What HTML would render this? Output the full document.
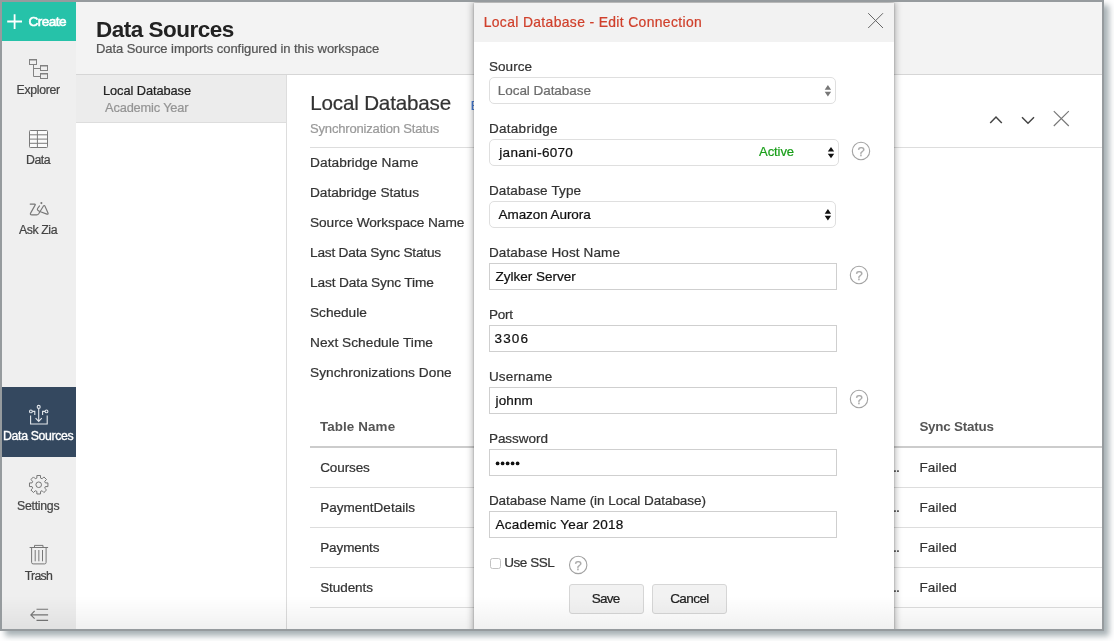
<!DOCTYPE html>
<html lang="en">
<head>
<meta charset="utf-8">
<title>Data Sources - Local Database - Edit Connection</title>
<style>
html,body{margin:0;padding:0;}
body{width:1114px;height:641px;overflow:hidden;background:#ffffff;position:relative;
  font-family:"Liberation Sans", sans-serif;}
#win{position:absolute;left:0;top:0;width:1104px;height:630.5px;box-sizing:border-box;
  border:2px solid #969b9e;background:#ffffff;overflow:hidden;
  box-shadow:4.5px 4.5px 6px 0 rgba(131,144,149,0.7);}
#c{position:absolute;left:-2px;top:-2px;width:1104px;height:631px;will-change:transform;}
.a{position:absolute;}
.t{position:absolute;white-space:pre;line-height:1;-webkit-text-stroke-width:0.22px;}
svg{position:absolute;left:0;top:0;overflow:visible;}
#dlg{position:absolute;left:474px;top:3px;width:420px;height:640px;background:#ffffff;
  box-shadow:0 0 2px rgba(0,0,0,0.26),0 0 7px 1px rgba(0,0,0,0.32);}
.sel{position:absolute;box-sizing:border-box;border:1px solid #dfdfdf;border-radius:5px;background:#fff;height:27px;}
.inp{position:absolute;box-sizing:border-box;border:1px solid #cfcfcf;background:#fff;height:27px;left:489px;width:348px;}
.btn{position:absolute;box-sizing:border-box;border:1px solid #d6d6d6;border-radius:3px;background:#f2f2f2;top:584px;height:30px;}
</style>
</head>
<body>
<div id="win"><div id="c">

<!-- sidebar -->
<div class="a" style="left:2px;top:2px;width:74px;height:627px;background:#efefef"></div>
<div class="a" style="left:2px;top:2px;width:74px;height:39px;background:#26c2a9"></div>
<div class="a" style="left:2px;top:387px;width:74px;height:70px;background:#34485f"></div>

<!-- page header -->
<div class="a" style="left:76px;top:2px;width:1026px;height:72px;background:#f3f3f3"></div>
<div class="a" style="left:76px;top:74px;width:1026px;height:1px;background:#d6d6d6"></div>

<!-- list panel -->
<div class="a" style="left:76px;top:75px;width:210px;height:47px;background:#ececec"></div>
<div class="a" style="left:76px;top:122px;width:210px;height:1px;background:#dddddd"></div>
<div class="a" style="left:286px;top:75px;width:1px;height:554px;background:#dddddd"></div>

<!-- detail lines -->
<div class="a" style="left:310px;top:147px;width:792px;height:1px;background:#dddddd"></div>
<div class="a" style="left:310px;top:446px;width:792px;height:2px;background:#cccccc"></div>
<div class="a" style="left:310px;top:487px;width:792px;height:1px;background:#dddddd"></div>
<div class="a" style="left:310px;top:527px;width:792px;height:1px;background:#dddddd"></div>
<div class="a" style="left:310px;top:567px;width:792px;height:1px;background:#dddddd"></div>
<div class="a" style="left:310px;top:607px;width:792px;height:1px;background:#dddddd"></div>

<!-- window icons -->
<svg width="1104" height="631" viewBox="0 0 1104 631" fill="none">
  <!-- plus -->
  <path d="M7.2 21.5H22M14.6 14.2V28.9" stroke="#ffffff" stroke-width="1.8"/>
  <!-- explorer -->
  <g stroke="#828282" stroke-width="1">
    <rect x="29.5" y="59.5" width="7" height="5"/>
    <path d="M29.5 60.4H36.5" stroke-opacity="0.55"/>
    <rect x="40.5" y="65.5" width="7" height="5"/>
    <path d="M40.5 66.4H47.5" stroke-opacity="0.55"/>
    <rect x="40.5" y="73.5" width="7" height="5"/>
    <path d="M40.5 74.4H47.5" stroke-opacity="0.55"/>
    <path d="M33.5 65V76.5H40.5M33.5 68.5H40.5"/>
  </g>
  <!-- data grid -->
  <g stroke="#7b7b7b" stroke-width="1">
    <rect x="29.5" y="130.5" width="18" height="17" rx="0.8" fill="#fbfbfb"/>
    <path d="M29.5 134.8H47.5M29.5 139.1H47.5M29.5 143.3H47.5M37.4 130.5V147.5"/>
  </g>
  <!-- zia -->
  <g stroke="#777777" stroke-width="1.15" stroke-linecap="round" stroke-linejoin="round">
    <path d="M30.2 204.05H34.6Q35.7 204.05 35.1 205.1L30.6 213.1Q29.7 214.9 31.8 214.9H36.7Q38 214.9 38.7 213.8L43.3 206.2Q44.3 204.8 45.1 206.4L48 213Q48.5 214.7 46.9 214.1L40.5 211.7Q36.4 210.2 37.6 208.5L39.5 205.9"/>
    <circle cx="41.4" cy="203.1" r="0.45" fill="#777777"/>
  </g>
  <!-- data sources -->
  <g stroke="#e3e7ec" stroke-width="1.1">
    <path d="M30.6 415.6V424H47.2V415.6"/>
    <path d="M38.7 408.6V421.2M35.6 418.2L38.7 421.4L41.8 418.2"/>
    <circle cx="38.7" cy="406.9" r="1.5"/>
    <circle cx="30.9" cy="411.4" r="1.4"/>
    <circle cx="46.5" cy="411.4" r="1.4"/>
    <path d="M32.4 411.4H34.8V414.9M45 411.4H42.6V414.9"/>
  </g>
  <!-- settings -->
  <g stroke="#777777" stroke-width="1" stroke-linejoin="round">
    <path d="M36.88 478.09 L36.87 475.53 L40.53 475.53 L40.52 478.09 L42.12 478.76 L43.92 476.93 L46.52 479.53 L44.69 481.33 L45.36 482.93 L47.92 482.92 L47.92 486.58 L45.36 486.57 L44.69 488.17 L46.52 489.97 L43.92 492.57 L42.12 490.74 L40.52 491.41 L40.53 493.97 L36.87 493.97 L36.88 491.41 L35.28 490.74 L33.48 492.57 L30.88 489.97 L32.71 488.17 L32.04 486.57 L29.48 486.58 L29.48 482.92 L32.04 482.93 L32.71 481.33 L30.88 479.53 L33.48 476.93 L35.28 478.76Z"/>
    <circle cx="38.7" cy="484.75" r="2.8"/>
  </g>
  <!-- trash -->
  <g stroke="#777777" stroke-width="1">
    <path d="M29.6 547.5H48.1M34.5 547.5V545.4H43V547.5"/>
    <path d="M31.6 547.5V562.4Q31.6 563.9 33.1 563.9H44.6Q46.1 563.9 46.1 562.4V547.5"/>
    <path d="M35.2 550V561.3M38.85 550V561.3M42.5 550V561.3"/>
  </g>
  <!-- collapse -->
  <g stroke="#777777" stroke-width="1.1">
    <path d="M36.5 609.3H48.1M30.8 614.9H48.1M36.5 620.4H48.1M34.6 611L30.8 614.9L34.6 618.7"/>
  </g>
  <!-- chevrons + close -->
  <g stroke="#444444" stroke-width="1.5">
    <path d="M990.2 123L996 117L1001.8 123"/>
    <path d="M1022 117.2L1028 123.2L1034 117.2"/>
  </g>
  <path d="M1053.8 111.2L1068.8 126M1068.8 111.2L1053.8 126" stroke="#777777" stroke-width="1.15"/>
</svg>

<span class="t" style="left:28.40px;top:14.79px;font-size:13.6px;-webkit-text-stroke-width:0.6px;letter-spacing:-0.535px;color:#ffffff">Create</span>
<span class="t" style="left:95.90px;top:19.15px;font-size:22.5px;font-weight:bold;-webkit-text-stroke-width:0;letter-spacing:-0.484px;color:#222222">Data Sources</span>
<span class="t" style="left:95.90px;top:42.40px;font-size:13px;letter-spacing:-0.059px;color:#555555">Data Source imports configured in this workspace</span>
<span class="t" style="left:16.60px;top:83.69px;font-size:12.3px;letter-spacing:-0.337px;color:#444444">Explorer</span>
<span class="t" style="left:26.10px;top:153.79px;font-size:12.3px;letter-spacing:-0.521px;color:#444444">Data</span>
<span class="t" style="left:19.00px;top:223.69px;font-size:12.3px;letter-spacing:-0.414px;color:#444444">Ask Zia</span>
<span class="t" style="left:3.10px;top:429.59px;font-size:12.3px;-webkit-text-stroke-width:0.35px;letter-spacing:-0.360px;color:#ffffff">Data Sources</span>
<span class="t" style="left:17.10px;top:499.79px;font-size:12.3px;letter-spacing:-0.280px;color:#444444">Settings</span>
<span class="t" style="left:24.80px;top:569.59px;font-size:12.3px;letter-spacing:-0.757px;color:#444444">Trash</span>
<span class="t" style="left:103.00px;top:84.96px;font-size:12.8px;letter-spacing:-0.066px;color:#222222">Local Database</span>
<span class="t" style="left:105.10px;top:102.16px;font-size:12.8px;letter-spacing:-0.161px;color:#949494">Academic Year</span>
<span class="t" style="left:310.20px;top:92.86px;font-size:20.6px;letter-spacing:-0.165px;color:#333333">Local Database</span>
<span class="t" style="left:470.80px;top:99.30px;font-size:13px;letter-spacing:-0.300px;color:#4a7fd6">Edit</span>
<span class="t" style="left:310.00px;top:122.10px;font-size:13px;letter-spacing:-0.171px;color:#999999">Synchronization Status</span>
<span class="t" style="left:310.00px;top:155.80px;font-size:13.7px;letter-spacing:0.073px;color:#333333">Databridge Name</span>
<span class="t" style="left:310.00px;top:185.80px;font-size:13.7px;letter-spacing:-0.034px;color:#333333">Databridge Status</span>
<span class="t" style="left:310.00px;top:215.80px;font-size:13.7px;letter-spacing:-0.067px;color:#333333">Source Workspace Name</span>
<span class="t" style="left:310.00px;top:245.60px;font-size:13.7px;letter-spacing:-0.211px;color:#333333">Last Data Sync Status</span>
<span class="t" style="left:310.00px;top:275.50px;font-size:13.7px;letter-spacing:-0.136px;color:#333333">Last Data Sync Time</span>
<span class="t" style="left:310.00px;top:306.40px;font-size:13.7px;letter-spacing:-0.047px;color:#333333">Schedule</span>
<span class="t" style="left:310.00px;top:336.20px;font-size:13.7px;letter-spacing:0.028px;color:#333333">Next Schedule Time</span>
<span class="t" style="left:310.00px;top:366.20px;font-size:13.7px;letter-spacing:0.046px;color:#333333">Synchronizations Done</span>
<span class="t" style="left:319.90px;top:419.66px;font-size:13.4px;font-weight:bold;-webkit-text-stroke-width:0;letter-spacing:0.113px;color:#555555">Table Name</span>
<span class="t" style="left:919.40px;top:419.66px;font-size:13.4px;font-weight:bold;-webkit-text-stroke-width:0;letter-spacing:-0.218px;color:#555555">Sync Status</span>
<span class="t" style="left:320.20px;top:460.97px;font-size:13.5px;letter-spacing:-0.097px;color:#333333">Courses</span>
<span class="t" style="left:320.20px;top:500.77px;font-size:13.5px;letter-spacing:0.020px;color:#333333">PaymentDetails</span>
<span class="t" style="left:320.20px;top:540.77px;font-size:13.5px;letter-spacing:-0.106px;color:#333333">Payments</span>
<span class="t" style="left:320.20px;top:580.77px;font-size:13.5px;letter-spacing:-0.075px;color:#333333">Students</span>
<span class="t" style="left:919.40px;top:461.17px;font-size:13.5px;letter-spacing:0.123px;color:#333333">Failed</span>
<span class="t" style="left:919.40px;top:501.17px;font-size:13.5px;letter-spacing:0.123px;color:#333333">Failed</span>
<span class="t" style="left:919.40px;top:541.17px;font-size:13.5px;letter-spacing:0.123px;color:#333333">Failed</span>
<span class="t" style="left:919.40px;top:581.17px;font-size:13.5px;letter-spacing:0.123px;color:#333333">Failed</span>
<span class="t" style="left:889.8px;top:459.9px;font-size:14px;letter-spacing:-0.8px;color:#333">...</span>
<span class="t" style="left:889.8px;top:499.9px;font-size:14px;letter-spacing:-0.8px;color:#333">...</span>
<span class="t" style="left:889.8px;top:539.9px;font-size:14px;letter-spacing:-0.8px;color:#333">...</span>
<span class="t" style="left:889.8px;top:579.9px;font-size:14px;letter-spacing:-0.8px;color:#333">...</span>

<!-- dialog -->
<div id="dlg"></div>
<div class="a" style="left:474px;top:3px;width:420px;height:39px;background:#f2f2f2"></div>

<div class="sel" style="left:489px;top:77px;width:347px;"></div>
<div class="sel" style="left:489px;top:139px;width:350px;"></div>
<div class="sel" style="left:489px;top:201px;width:347px;"></div>
<div class="inp" style="top:263px"></div>
<div class="inp" style="top:325px"></div>
<div class="inp" style="top:387px"></div>
<div class="inp" style="top:449px"></div>
<div class="inp" style="top:511px"></div>
<div class="a" style="left:489.5px;top:558px;width:11px;height:11px;box-sizing:border-box;border:1px solid #c2c2c2;border-radius:2.5px;background:#fff"></div>
<div class="btn" style="left:569px;width:75px"></div>
<div class="btn" style="left:652px;width:75px"></div>

<svg width="1104" height="631" viewBox="0 0 1104 631" fill="none">
  <!-- dialog close -->
  <path d="M868.2 13.2L883 28M883 13.2L868.2 28" stroke="#666666" stroke-width="1"/>
  <!-- select arrows -->
  <path d="M824.7 89.7L827.9 85.1L831.1 89.7ZM824.7 91.8L831.1 91.8L827.9 96.4Z" fill="#777777"/>
  <path d="M827.8 151.6L831 147L834.2 151.6ZM827.8 153.7L834.2 153.7L831 158.3Z" fill="#111111"/>
  <path d="M824.7 213.7L827.9 209.1L831.1 213.7ZM824.7 215.8L831.1 215.8L827.9 220.4Z" fill="#111111"/>
  <!-- help icons -->
  <g stroke="#a2a2a2" stroke-width="1.1" fill="#ffffff">
    <circle cx="861" cy="151" r="8.7"/>
    <circle cx="859" cy="275" r="8.7"/>
    <circle cx="859" cy="399" r="8.7"/>
    <circle cx="578.2" cy="564.9" r="8.7"/>
  </g>
  <!-- password dots -->
  <g fill="#111111">
    <circle cx="497.6" cy="463.4" r="1.9"/><circle cx="502.6" cy="463.4" r="1.9"/><circle cx="507.6" cy="463.4" r="1.9"/><circle cx="512.6" cy="463.4" r="1.9"/><circle cx="517.6" cy="463.4" r="1.9"/>
  </g>
  <g font-family="Liberation Sans, sans-serif" font-size="13" fill="#a8a8a8" stroke="#a8a8a8" stroke-width="0.25" text-anchor="middle">
    <text x="861" y="155.9">?</text>
    <text x="859" y="279.9">?</text>
    <text x="859" y="403.9">?</text>
    <text x="578.2" y="569.8">?</text>
  </g>
</svg>

<span class="t" style="left:483.70px;top:16.43px;font-size:13.9px;letter-spacing:0.358px;color:#d0402c">Local Database - Edit Connection</span>
<span class="t" style="left:488.90px;top:59.67px;font-size:13.5px;letter-spacing:0.086px;color:#333333">Source</span>
<span class="t" style="left:488.90px;top:121.57px;font-size:13.5px;letter-spacing:0.297px;color:#333333">Databridge</span>
<span class="t" style="left:488.90px;top:183.67px;font-size:13.5px;letter-spacing:0.134px;color:#333333">Database Type</span>
<span class="t" style="left:488.90px;top:245.57px;font-size:13.5px;letter-spacing:0.119px;color:#333333">Database Host Name</span>
<span class="t" style="left:488.90px;top:307.57px;font-size:13.5px;letter-spacing:-0.216px;color:#333333">Port</span>
<span class="t" style="left:488.90px;top:369.57px;font-size:13.5px;letter-spacing:0.162px;color:#333333">Username</span>
<span class="t" style="left:488.90px;top:431.57px;font-size:13.5px;letter-spacing:-0.020px;color:#333333">Password</span>
<span class="t" style="left:488.90px;top:493.57px;font-size:13.5px;letter-spacing:-0.039px;color:#333333">Database Name (in Local Database)</span>
<span class="t" style="left:497.80px;top:83.57px;font-size:13.5px;letter-spacing:-0.056px;color:#6c6c6c">Local Database</span>
<span class="t" style="left:499.30px;top:145.97px;font-size:13.5px;letter-spacing:0.300px;color:#111111">janani-6070</span>
<span class="t" style="left:759.10px;top:144.50px;font-size:13px;letter-spacing:-0.084px;color:#1a9f1a">Active</span>
<span class="t" style="left:498.60px;top:207.57px;font-size:13.5px;letter-spacing:-0.082px;color:#111111">Amazon Aurora</span>
<span class="t" style="left:495.50px;top:269.57px;font-size:13.5px;letter-spacing:0.003px;color:#111111">Zylker Server</span>
<span class="t" style="left:494.50px;top:331.97px;font-size:13.5px;letter-spacing:1.138px;color:#111111">3306</span>
<span class="t" style="left:495.50px;top:393.77px;font-size:13.5px;letter-spacing:0.128px;color:#111111">johnm</span>
<span class="t" style="left:495.50px;top:517.97px;font-size:13.5px;letter-spacing:0.224px;color:#111111">Academic Year 2018</span>
<span class="t" style="left:504.20px;top:555.67px;font-size:13.5px;letter-spacing:-0.440px;color:#333333">Use SSL</span>
<span class="t" style="left:591.70px;top:591.67px;font-size:13.5px;letter-spacing:-0.695px;color:#222222">Save</span>
<span class="t" style="left:670.20px;top:591.67px;font-size:13.5px;letter-spacing:-0.572px;color:#222222">Cancel</span>

<!-- bottom fade -->
<div class="a" style="left:2px;top:596px;width:1100px;height:33px;background:linear-gradient(to bottom, rgba(0,0,0,0) 0%, rgba(0,0,0,0.055) 100%)"></div>

</div></div>
</body>
</html>
